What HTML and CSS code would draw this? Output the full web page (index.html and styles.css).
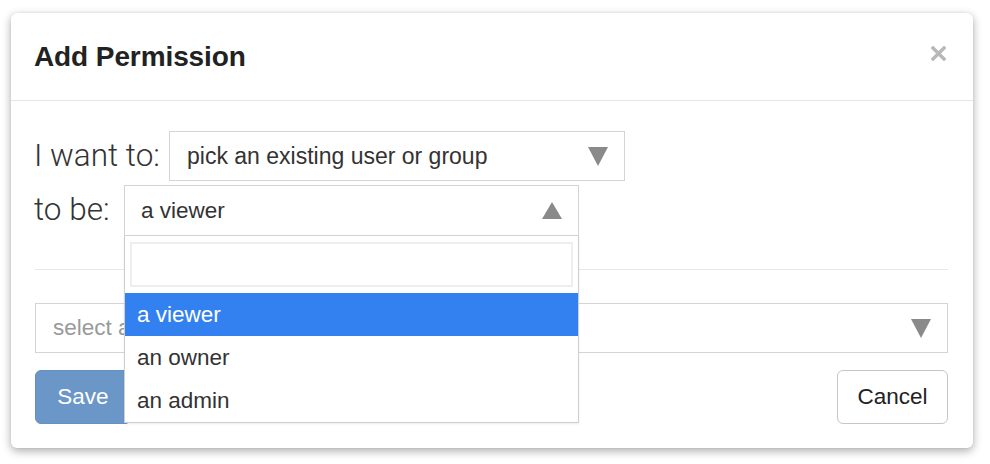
FILE: index.html
```html
<!DOCTYPE html>
<html>
<head>
<meta charset="utf-8">
<link rel="stylesheet" href="styles.css">
</head>
<body>
<div class="modal">
  <div class="modal-header">
    <h4 class="title">Add Permission</h4>
    <button class="close" aria-label="Close">
      <svg width="15" height="15" viewBox="0 0 15 15"><path d="M2 2 L13 13 M13 2 L2 13" stroke="#b8b8b8" stroke-width="3.4" stroke-linecap="square"/></svg>
    </button>
  </div>
  <div class="modal-body">
    <div class="row">
      <span class="lbl lbl-want">I want to:</span>
      <div class="select select-want">
        <span class="sel-text">pick an existing user or group</span>
        <svg class="arrow" width="20" height="19" viewBox="0 0 20 19"><polygon points="0,0 20,0 10,19" fill="#8a8a8a"/></svg>
      </div>
    </div>
    <div class="row row2">
      <span class="lbl lbl-be">to be:</span>
      <div class="select-wrap">
        <div class="select select-be">
          <span class="sel-text">a viewer</span>
          <svg class="arrow" width="20" height="17" viewBox="0 0 20 17"><polygon points="10,0 20,17 0,17" fill="#8a8a8a"/></svg>
        </div>
        <div class="dropdown">
          <div class="search"></div>
          <ul class="options">
            <li class="opt active">a viewer</li>
            <li class="opt">an owner</li>
            <li class="opt">an admin</li>
          </ul>
        </div>
      </div>
    </div>
    <hr class="divider">
    <div class="select select-full">
      <span class="sel-text placeholder">select a user</span>
      <svg class="arrow" width="20" height="19" viewBox="0 0 20 19"><polygon points="0,0 20,0 10,19" fill="#8a8a8a"/></svg>
    </div>
    <div class="footer">
      <button class="btn btn-save">Save</button>
      <button class="btn btn-cancel">Cancel</button>
    </div>
  </div>
</div>
</body>
</html>
```
FILE: styles.css
```css
html, body {
  margin: 0;
  padding: 0;
  background: #ffffff;
}
body {
  font-family: "Liberation Sans", Arial, sans-serif;
  color: #333;
  width: 990px;
  height: 464px;
  overflow: hidden;
}
.modal {
  margin: 13px 0 0 11px;
  width: 962px;
  height: 435px;
  box-sizing: border-box;
  background: #fff;
  border-radius: 6px;
  box-shadow: 0 3px 10px rgba(0, 0, 0, 0.33), 0 0 2px rgba(0,0,0,0.08);
}
.modal-header {
  height: 88px;
  box-sizing: border-box;
  border-bottom: 1px solid #e5e5e5;
  display: flex;
  align-items: center;
  justify-content: space-between;
  padding: 0 27px 0 23px;
}
.title {
  margin: 0;
  font-size: 28px;
  font-weight: bold;
  color: #222;
  letter-spacing: -0.1px;
}
.close {
  border: 0;
  background: none;
  padding: 0;
  margin-top: -6px;
  display: flex;
}
.modal-body {
  padding: 30px 25px 24px 24px;
  position: relative;
}
.row {
  display: flex;
  align-items: center;
}
.row2 {
  margin-top: 4px;
}
.lbl {
  font-family: Roboto, "Liberation Sans", sans-serif;
  font-weight: 300;
  font-size: 31.5px;
  color: #333;
  margin-left: -1px;
  margin-top: -2px;
}
.lbl-want { width: 135px; }
.lbl-be { width: 90px; }
.select {
  box-sizing: border-box;
  height: 50px;
  border: 1px solid #d4d4d4;
  display: flex;
  align-items: center;
  justify-content: space-between;
  padding: 0 16px 0 16px;
  background: #fff;
}
.sel-text {
  font-size: 22.5px;
  color: #333;
}
.select-want {
  width: 456px;
  padding-left: 17px;
}
.select-want .sel-text { font-size: 23px; }
.select-want .arrow { margin-top: 1px; }
.select-wrap {
  position: relative;
}
.select-be {
  width: 455px;
  height: 51px;
  padding-left: 16px;
}
.dropdown {
  position: absolute;
  top: 100%;
  left: 0;
  width: 455px;
  box-sizing: border-box;
  border: 1px solid #cfcfcf;
  border-top: 0;
  background: #fff;
  z-index: 5;
  padding-top: 6px;
  box-shadow: 0 1px 2px rgba(0,0,0,0.08);
}
.search {
  margin: 0 5px;
  height: 45px;
  box-sizing: border-box;
  border: 2px solid #eeeeee;
}
.options {
  list-style: none;
  margin: 6px 0 0 0;
  padding: 0;
}
.opt {
  height: 43px;
  line-height: 43px;
  padding-left: 12px;
  font-size: 22.5px;
  color: #333;
}
.opt.active {
  background: #3381f0;
  color: #fff;
}
.divider {
  border: 0;
  border-top: 1px solid #e8e8e8;
  margin: 33px 0 33px 0;
  height: 0;
}
.select-full {
  width: 913px;
  height: 50px;
  padding-left: 17px;
}
.placeholder {
  color: #999;
}
.footer {
  display: flex;
  justify-content: space-between;
  margin-top: 17px;
}
.btn {
  height: 54px;
  border-radius: 6px;
  font-family: "Liberation Sans", Arial, sans-serif;
  font-size: 22.5px;
  box-sizing: border-box;
}
.btn-save {
  background: #6a96c8;
  border: 1px solid #6590c2;
  color: #fff;
  width: 96px;
  padding: 0;
}
.btn-cancel {
  background: #fff;
  border: 1px solid #c6c6c6;
  color: #222;
  width: 111px;
  padding: 0;
}
```
